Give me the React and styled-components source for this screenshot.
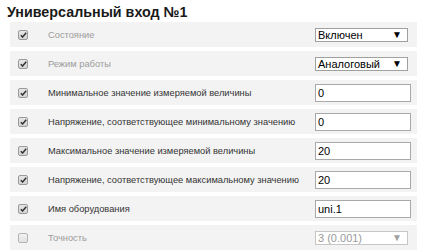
import React from "react";
import styled, { createGlobalStyle } from "styled-components";

const Global = createGlobalStyle`
  html, body { margin: 0; padding: 0; background: #fff; }
  body { font-family: "Liberation Sans", Arial, sans-serif; }
`;

const Page = styled.div`
  padding: 3px 6px 0 10px;
  width: 407px;
`;

const Title = styled.h1`
  margin: 0 0 0 -3px;
  height: 19px;
  font-size: 14.3px;
  line-height: 18px;
  font-weight: bold;
  color: #1a1a1a;
`;

const Rows = styled.div`
  display: flex;
  flex-direction: column;
  gap: 4px;
`;

const Row = styled.div`
  display: grid;
  grid-template-columns: 297px 110px;
  height: 25px;
`;

const LabelCell = styled.div`
  display: flex;
  align-items: center;
  background: #f3f3f3;
  padding-left: 8px;
`;

const ValueCell = styled.div`
  display: flex;
  align-items: center;
  background: #f3f3f3;
  padding-left: 8px;
`;

const Check = styled.span`
  box-sizing: border-box;
  width: 10px;
  height: 10px;
  border: 1px solid ${(p) => (p.$checked ? "#9a9a9a" : "#b4b4b4")};
  border-radius: 2px;
  background: ${(p) => (p.$checked ? "linear-gradient(#e6e6e6, #d4d4d4)" : "linear-gradient(#f2f2f2, #e2e2e2)")};
  display: flex;
  align-items: center;
  justify-content: center;
  margin-right: 20px;
`;

const Label = styled.span`
  font-size: 9.3px;
  color: ${(p) => (p.$muted ? "#9b9b9b" : "#333")};
  white-space: nowrap;
`;

const Input = styled.div`
  box-sizing: border-box;
  width: 96px;
  height: 18px;
  border: 1px solid #a9a9a9;
  background: #fff;
  font-size: 11px;
  line-height: 16px;
  padding-left: 2px;
  color: #000;
`;

const Select = styled.div`
  box-sizing: border-box;
  width: 93px;
  height: 14px;
  border: 1px solid ${(p) => (p.$disabled ? "#c6c6c6" : "#a0a0a0")};
  background: #fff;
  display: flex;
  align-items: center;
  justify-content: space-between;
  padding: 0 5px 0 2px;
  font-size: 11px;
  color: ${(p) => (p.$disabled ? "#9a9a9a" : "#000")};
`;

const Arrow = styled.span`
  font-size: 10px;
  line-height: 10px;
  color: ${(p) => (p.$disabled ? "#a0a0a0" : "#000")};
`;

const CheckMark = () => (
  <svg width="7" height="6" viewBox="0 0 7 6">
    <path d="M0.8 3.2 L2.6 5 L6.2 0.8" fill="none" stroke="#333" strokeWidth="1.5" />
  </svg>
);

const rows = [
  { label: "Состояние", muted: true, type: "select", value: "Включен", checked: true },
  { label: "Режим работы", muted: true, type: "select", value: "Аналоговый", checked: true },
  { label: "Минимальное значение измеряемой величины", type: "input", value: "0", checked: true },
  { label: "Напряжение, соответствующее минимальному значению", type: "input", value: "0", checked: true },
  { label: "Максимальное значение измеряемой величины", type: "input", value: "20", checked: true },
  { label: "Напряжение, соответствующее максимальному значению", type: "input", value: "20", checked: true },
  { label: "Имя оборудования", type: "input", value: "uni.1", checked: true },
  { label: "Точность", muted: true, type: "select", value: "3 (0.001)", checked: false, disabled: true },
];

export default function App() {
  return (
    <>
      <Global />
      <Page>
        <Title>Универсальный вход №1</Title>
        <Rows>
          {rows.map((r) => (
            <Row key={r.label}>
              <LabelCell>
                <Check $checked={r.checked}>{r.checked && <CheckMark />}</Check>
                <Label $muted={r.muted}>{r.label}</Label>
              </LabelCell>
              <ValueCell>
                {r.type === "input" ? (
                  <Input>{r.value}</Input>
                ) : (
                  <Select $disabled={r.disabled}>
                    <span>{r.value}</span>
                    <Arrow $disabled={r.disabled}>▼</Arrow>
                  </Select>
                )}
              </ValueCell>
            </Row>
          ))}
        </Rows>
      </Page>
    </>
  );
}
